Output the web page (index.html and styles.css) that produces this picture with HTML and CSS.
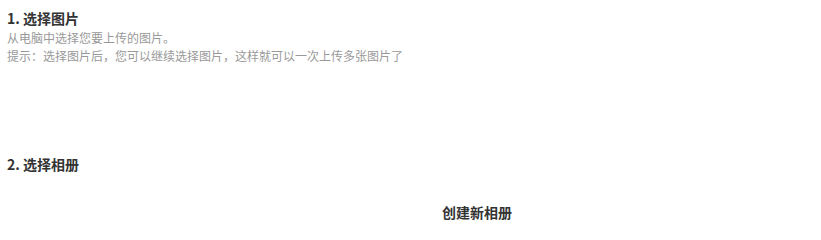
FILE: index.html
```html
<!DOCTYPE html>
<html lang="zh-CN">
<head>
<meta charset="utf-8">
<title>上传图片</title>
<link rel="stylesheet" href="styles.css">
</head>
<body>
<div class="wrap">
  <section class="step step-pics">
    <h3 class="step-title">1. 选择图片</h3>
    <p class="step-desc">从电脑中选择您要上传的图片。</p>
    <p class="step-desc">提示：选择图片后，您可以继续选择图片，这样就可以一次上传多张图片了</p>
  </section>
  <section class="step step-album">
    <h3 class="step-title">2. 选择相册</h3>
    <div class="album-row">
      <span class="new-album">创建新相册</span>
    </div>
  </section>
</div>
</body>
</html>
```
FILE: styles.css
```css
html, body {
  margin: 0;
  padding: 0;
  background: #fff;
}
body {
  font-family: "Noto Sans CJK SC", "Noto Sans", sans-serif;
  color: #333;
}
.wrap {
  padding: 8px 7px 0;
}
.step-title {
  margin: 0;
  font-size: 14px;
  line-height: 20px;
  font-weight: bold;
  color: #333;
}
.step-desc {
  margin: 0;
  font-size: 12px;
  line-height: 17.5px;
  color: #999;
}
.step-title + .step-desc {
  margin-top: 1px;
}
.step-album {
  margin-top: 90px;
}
.album-row {
  margin-top: 27px;
  padding-left: 435px;
  line-height: 20px;
}
.new-album {
  font-size: 14px;
  font-weight: bold;
  color: #333;
}
```
